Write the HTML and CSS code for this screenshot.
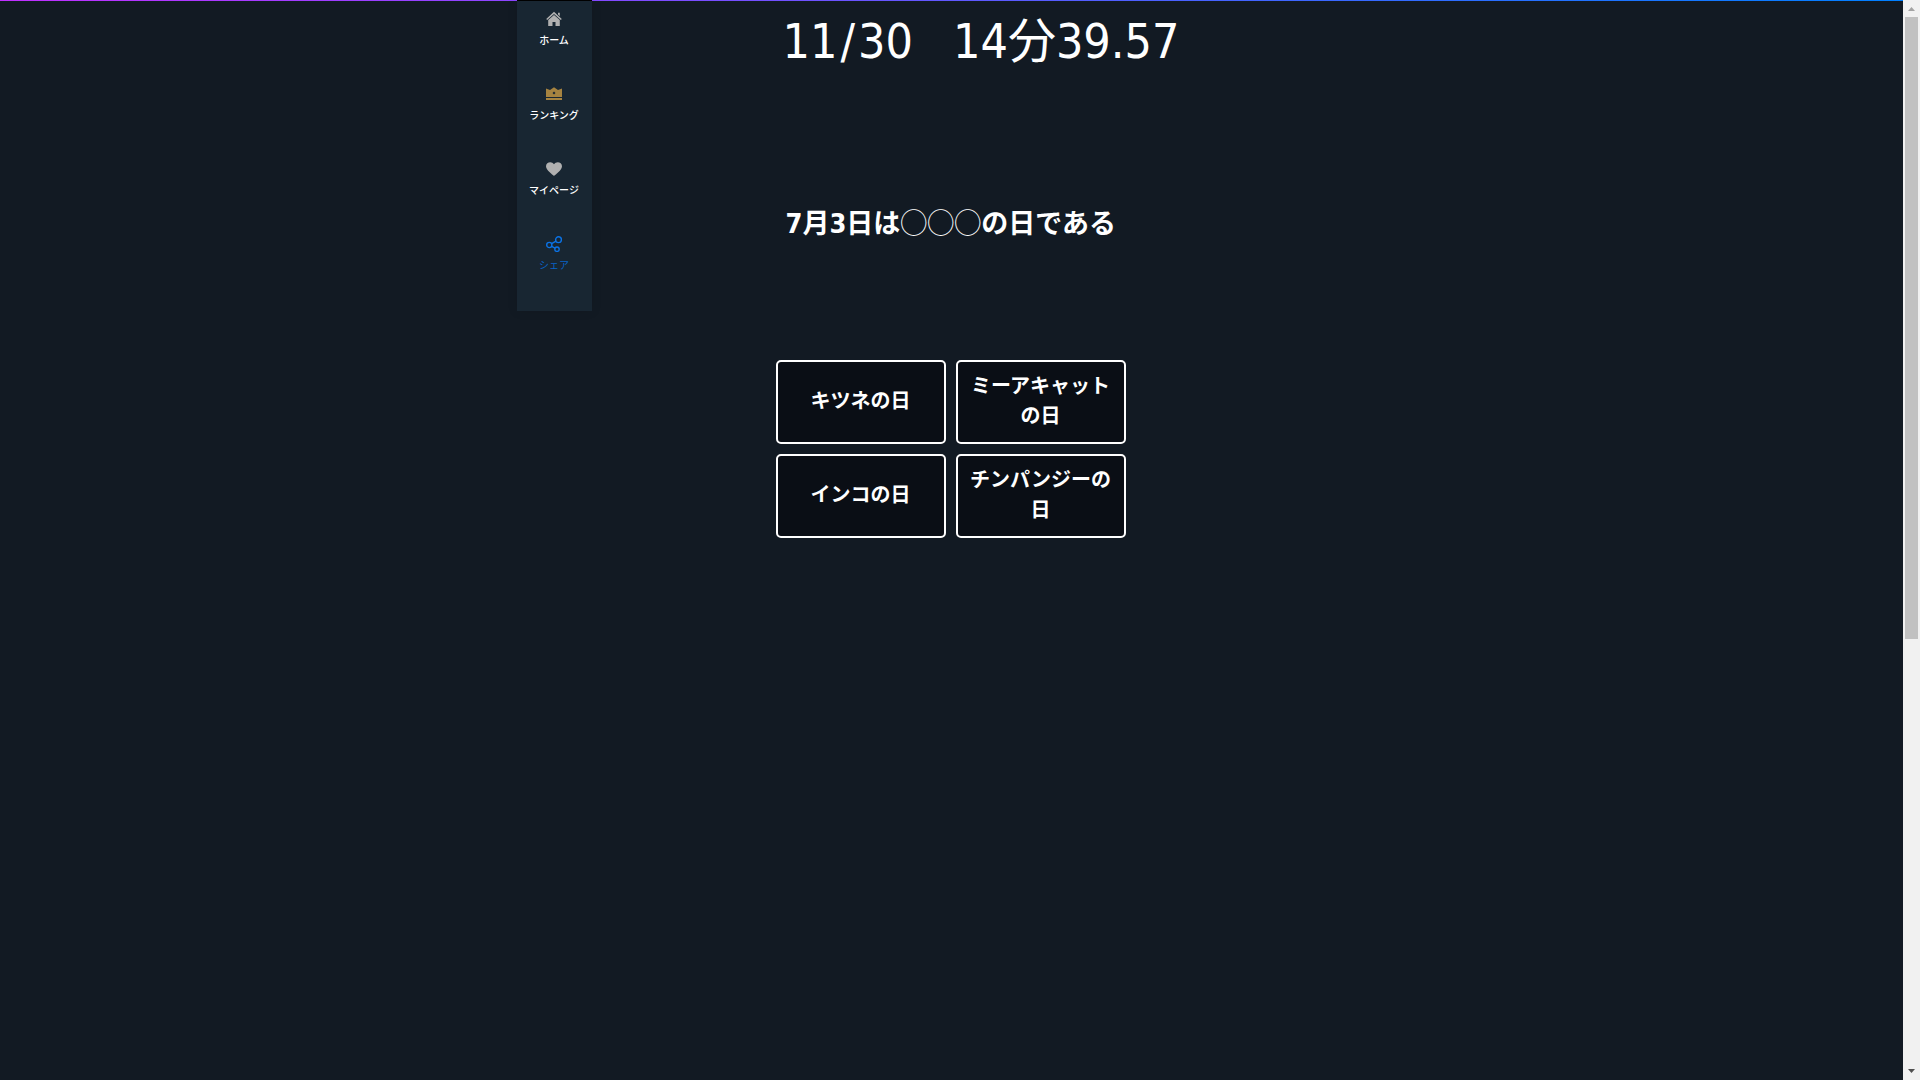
FILE: index.html
```html
<!DOCTYPE html>
<html lang="ja">
<head>
<meta charset="utf-8">
<meta name="viewport" content="width=device-width, initial-scale=1">
<title>クイズ</title>
<link rel="stylesheet" href="styles.css">
</head>
<body>
<div class="page">
  <div class="wrapper">
    <nav class="sidebar">
      <a class="nav-item" href="#">
        <svg class="icon" viewBox="0 0 16 16" fill="#b0b0b0" aria-hidden="true"><path d="M8 .8 15.8 8l-1 1L8 2.900 1.200 9l-1-1z"/><path d="M2.200 9 8 3.900 13.800 9v6H9.500v-4h-3v4H2.200zM12 1.800h1.800v3.500L12 3.600z"/></svg>
        <span>ホーム</span>
      </a>
      <a class="nav-item" href="#">
        <svg class="icon" viewBox="0 0 16 16" fill="#a68340" aria-hidden="true"><path fill-rule="evenodd" d="M0 2.500 4 4l4-2.700L12 4l4-1.500V11H0zM8 5.500 6.500 7 8 8.500 9.500 7z"/><path d="M0 12h16v2H0z"/></svg>
        <span>ランキング</span>
      </a>
      <a class="nav-item" href="#">
        <svg class="icon" viewBox="0 0 16 16" fill="#b0b0b0" aria-hidden="true"><path d="M8 15C6.500 13.300 0 9.500 0 5.200 0 .8 6-.2 8 3.300 10-.2 16 .8 16 5.200 16 9.500 9.500 13.300 8 15z"/></svg>
        <span>マイページ</span>
      </a>
      <a class="nav-item nav-share" href="#">
        <svg class="icon" viewBox="0 0 16 16" fill="none" stroke="#0b73e6" stroke-width="1.400" aria-hidden="true"><circle cx="3.300" cy="9" r="2.600"/><circle cx="12.500" cy="3.700" r="2.900"/><circle cx="11" cy="13.200" r="2.200"/><path d="M5.600 7.700 10 5.200M5.600 10.300l3.500 1.900"/></svg>
        <span>シェア</span>
      </a>
    </nav>
    <main class="quiz">
      <div class="status"><span>11<span class="separator">/</span>30</span><span>14分39.57</span></div>
      <h1 class="question">7月3日は<span class="blank">◯◯◯</span>の日である</h1>
      <div class="answers">
        <button class="answer" type="button">キツネの日</button>
        <button class="answer" type="button">ミーアキャットの日</button>
        <button class="answer" type="button">インコの日</button>
        <button class="answer" type="button">チンパンジーの日</button>
      </div>
    </main>
  </div>
</div>
<div class="scrollbar" aria-hidden="true">
  <svg class="arrow" viewBox="0 0 17 17" fill="#a3a3a3"><path d="M5 11h7L8.500 7z"/></svg>
  <div class="track"><div class="thumb"></div></div>
  <svg class="arrow" viewBox="0 0 17 17" fill="#505050"><path d="M5 6h7l-3.500 4z"/></svg>
</div>
</body>
</html>
```
FILE: styles.css
```css
* {
  box-sizing: border-box;
}

body {
  margin: 0;
  min-height: 100vh;
  display: grid;
  grid-template-columns: 1fr 17px;
  background: #121a23;
  color: #fff;
  font-family: "DejaVu Sans Condensed", "Noto Sans CJK JP", sans-serif;
}

.page {
  background: linear-gradient(90deg, #c030ff, #0080ff) top / 100% 1px no-repeat;
}

.wrapper {
  display: flex;
  align-items: flex-start;
  gap: 184px;
  max-width: 870px;
  margin: 0 auto;
}

.sidebar {
  flex: none;
  width: 75px;
  padding: 0 0 10px;
  border-top: 1px solid #000;
  background: #182632;
  box-shadow: 0 0 10px rgba(0, 0, 0, 0.1);
}

.nav-item {
  display: flex;
  flex-direction: column;
  align-items: center;
  gap: 6px;
  height: 75px;
  padding-top: 10px;
  color: #fff;
  font-size: 10px;
  font-weight: 500;
  line-height: 16px;
  text-decoration: none;
}

.nav-share {
  color: #0864c8;
  font-weight: 400;
}

.icon {
  display: block;
  width: 16px;
  height: 16px;
}

.quiz {
  flex: 1;
}

.status {
  display: flex;
  gap: 40px;
  padding: 5px 0 0 7px;
  font-size: 48px;
  line-height: 72px;
  white-space: nowrap;
}

.separator {
  padding: 0 3px;
}

.question {
  margin: 125px 0 0;
  padding-left: 10px;
  font-size: 27px;
  font-weight: 700;
  line-height: 40px;
  white-space: nowrap;
}

.blank {
  font-family: "Noto Sans CJK JP", sans-serif;
  font-weight: 400;
}

.answers {
  display: grid;
  grid-template-columns: 170px 170px;
  grid-auto-rows: 84px;
  gap: 10px;
  margin-top: 116px;
}

.answer {
  padding: 0 10px 3px;
  border: 2px solid #fff;
  border-radius: 5px;
  background: #0a0e15;
  color: #fff;
  font-family: inherit;
  font-size: 20px;
  font-weight: 700;
  line-height: 30px;
}

.scrollbar {
  display: flex;
  flex-direction: column;
  background: #f1f1f1;
}

.arrow {
  display: block;
  width: 17px;
  height: 17px;
}

.track {
  flex: 1;
  padding: 0 2px;
}

.thumb {
  height: 59.5%;
  background: #c1c1c1;
}
```
